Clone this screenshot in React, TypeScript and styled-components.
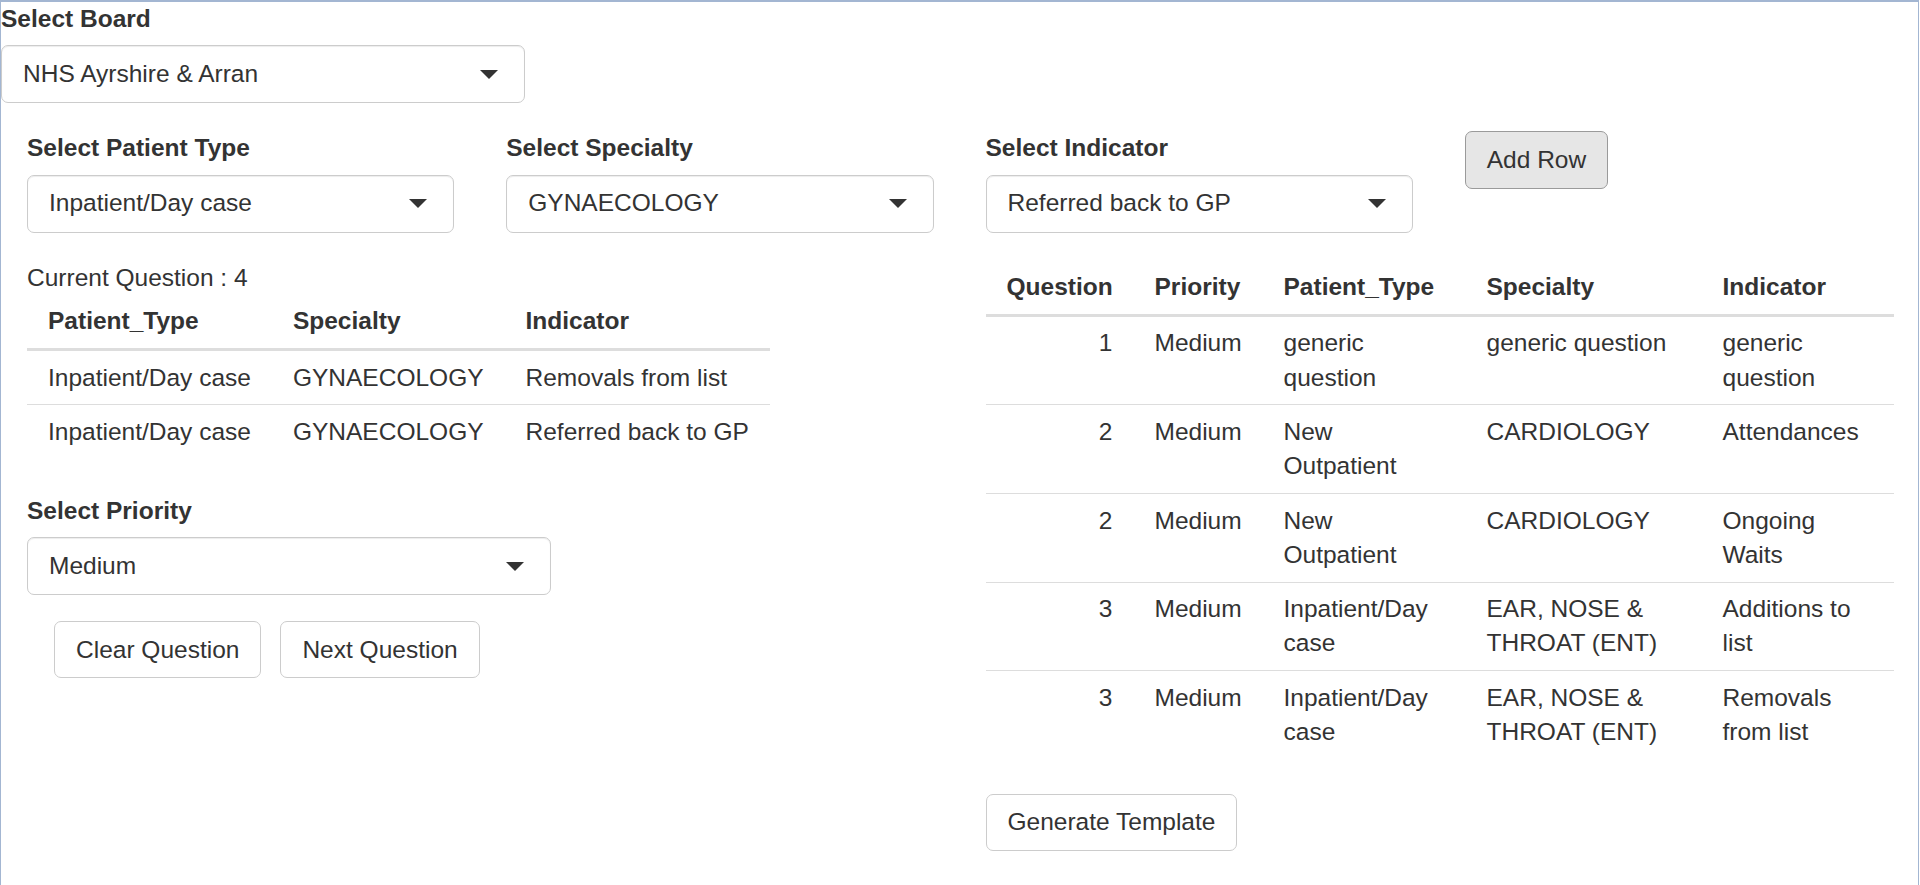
import { FC } from 'react';
import styled, { createGlobalStyle, css } from 'styled-components';

const GlobalStyle = createGlobalStyle`
  * {
    box-sizing: border-box;
  }
  body {
    margin: 0;
    background: #ffffff;
    color: #333333;
    font-family: 'Liberation Sans', Arial, Helvetica, sans-serif;
    font-size: 24.5px;
    line-height: 34.3px;
  }
`;

const Frame = styled.div`
  min-height: 100vh;
  margin-right: 1px;
  border: 1px solid #a3b6d2;
  border-top-width: 2px;
  border-bottom: none;
`;

const FormGroup = styled.div<{ $width?: string; $gap?: number }>`
  width: ${(p) => p.$width ?? '100%'};
  margin-bottom: ${(p) => p.$gap ?? 26}px;
`;

const Label = styled.label`
  display: block;
  font-weight: 700;
  margin-bottom: 9px;
`;

const SelectBox = styled.div`
  display: flex;
  align-items: center;
  height: 58px;
  padding: 0 26px 0 21px;
  border: 1px solid #cccccc;
  border-radius: 7px;
  background: #ffffff;
  box-shadow: inset 0 1px 1px rgba(0, 0, 0, 0.075);
  white-space: nowrap;
`;

const Caret = styled.span`
  margin-left: auto;
  width: 0;
  height: 0;
  border-style: solid;
  border-width: 9px 9px 0 9px;
  border-color: #333333 transparent transparent transparent;
`;

const TopRow = styled.div`
  display: grid;
  grid-template-columns: repeat(4, 1fr);
`;

const HalfRow = styled.div`
  display: grid;
  grid-template-columns: 1fr 1fr;
  margin-top: 2px;
`;

const Column = styled.div`
  padding: 0 26px;
  min-width: 0;
`;

const Caption = styled.div`
  white-space: nowrap;
`;

const Table = styled.table<{ $full?: boolean }>`
  border-collapse: collapse;
  border-spacing: 0;
  margin-bottom: 35px;
  ${(p) =>
    p.$full
      ? css`
          width: 100%;
          table-layout: fixed;
        `
      : css`
          width: auto;
        `}
`;

const Th = styled.th<{ $right?: boolean }>`
  padding: 9.5px 21px;
  font-weight: 700;
  text-align: ${(p) => (p.$right ? 'right' : 'left')};
  vertical-align: bottom;
  border-bottom: 3.5px solid #dddddd;
  white-space: nowrap;
`;

const Td = styled.td<{ $right?: boolean }>`
  padding: 9.5px 21px;
  text-align: ${(p) => (p.$right ? 'right' : 'left')};
  vertical-align: top;
  border-top: 1px solid #dddddd;
`;

const Button = styled.button<{ $active?: boolean }>`
  display: inline-block;
  padding: 10.5px 21px;
  font-family: inherit;
  font-size: 24.5px;
  line-height: 34.3px;
  color: #333333;
  white-space: nowrap;
  border-radius: 7px;
  border: 1px solid ${(p) => (p.$active ? '#9a9a9a' : '#cccccc')};
  background: ${(p) => (p.$active ? '#e6e6e6' : '#ffffff')};
  cursor: pointer;
`;

const ButtonBar = styled.div`
  display: flex;
  gap: 19px;
  padding-left: 27px;
  margin-top: 2px;
`;

type SelectProps = { label: string; value: string; width?: string; gap?: number };

const SelectInput: FC<SelectProps> = ({ label, value, width, gap }) => (
  <FormGroup $width={width} $gap={gap}>
    <Label>{label}</Label>
    <SelectBox>
      <span>{value}</span>
      <Caret />
    </SelectBox>
  </FormGroup>
);

const currentRows = [
  ['Inpatient/Day case', 'GYNAECOLOGY', 'Removals from list'],
  ['Inpatient/Day case', 'GYNAECOLOGY', 'Referred back to GP'],
];

const templateRows = [
  ['1', 'Medium', 'generic question', 'generic question', 'generic question'],
  ['2', 'Medium', 'New Outpatient', 'CARDIOLOGY', 'Attendances'],
  ['2', 'Medium', 'New Outpatient', 'CARDIOLOGY', 'Ongoing Waits'],
  ['3', 'Medium', 'Inpatient/Day case', 'EAR, NOSE & THROAT (ENT)', 'Additions to list'],
  ['3', 'Medium', 'Inpatient/Day case', 'EAR, NOSE & THROAT (ENT)', 'Removals from list'],
];

const templateCols = [148, 129, 203, 236, 192];

export default function App() {
  return (
    <>
      <GlobalStyle />
      <Frame>
        <SelectInput label="Select Board" value="NHS Ayrshire & Arran" width="524px" gap={28} />

        <TopRow>
          <Column>
            <SelectInput label="Select Patient Type" value="Inpatient/Day case" />
          </Column>
          <Column>
            <SelectInput label="Select Specialty" value="GYNAECOLOGY" />
          </Column>
          <Column>
            <SelectInput label="Select Indicator" value="Referred back to GP" />
          </Column>
          <Column>
            <Button $active>Add Row</Button>
          </Column>
        </TopRow>

        <HalfRow>
          <Column>
            <Caption>Current Question : 4</Caption>
            <Table>
              <thead>
                <tr>
                  <Th>Patient_Type</Th>
                  <Th>Specialty</Th>
                  <Th>Indicator</Th>
                </tr>
              </thead>
              <tbody>
                {currentRows.map((row, i) => (
                  <tr key={i}>
                    {row.map((cell, j) => (
                      <Td key={j}>{cell}</Td>
                    ))}
                  </tr>
                ))}
              </tbody>
            </Table>
            <SelectInput label="Select Priority" value="Medium" width="524px" />
            <ButtonBar>
              <Button>Clear Question</Button>
              <Button>Next Question</Button>
            </ButtonBar>
          </Column>

          <Column>
            <Table $full>
              <colgroup>
                {templateCols.map((w, i) => (
                  <col key={i} style={{ width: w }} />
                ))}
              </colgroup>
              <thead>
                <tr>
                  <Th $right>Question</Th>
                  <Th>Priority</Th>
                  <Th>Patient_Type</Th>
                  <Th>Specialty</Th>
                  <Th>Indicator</Th>
                </tr>
              </thead>
              <tbody>
                {templateRows.map((row, i) => (
                  <tr key={i}>
                    {row.map((cell, j) => (
                      <Td key={j} $right={j === 0}>
                        {cell}
                      </Td>
                    ))}
                  </tr>
                ))}
              </tbody>
            </Table>
            <Button>Generate Template</Button>
          </Column>
        </HalfRow>
      </Frame>
    </>
  );
}
